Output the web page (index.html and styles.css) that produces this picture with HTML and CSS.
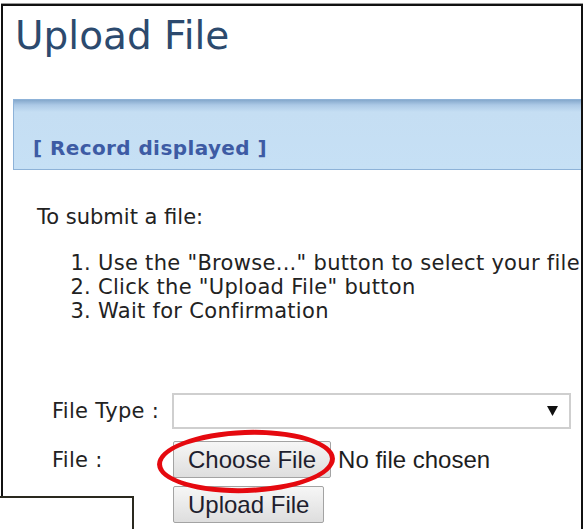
FILE: index.html
```html
<!DOCTYPE html>
<html lang="en">
<head>
<meta charset="utf-8">
<title>Upload File</title>
<link rel="stylesheet" href="styles.css">
</head>
<body>
<div class="window">
  <h1 class="title">Upload File</h1>
  <div class="banner"><span class="banner-text">[ Record displayed ]</span></div>
  <p class="intro">To submit a file:</p>
  <ol class="steps">
    <li>Use the "Browse..." button to select your file</li>
    <li>Click the "Upload File" button</li>
    <li>Wait for Confirmation</li>
  </ol>
  <div class="form">
    <div class="row">
      <span class="label">File Type :</span>
      <div class="select">
        <svg class="arrow" width="11" height="10" viewBox="0 0 11 10"><polygon points="0,0 11,0 5.5,10" fill="#111"/></svg>
      </div>
    </div>
    <div class="row row-file">
      <span class="label">File :</span>
      <div class="file">
        <span class="btn-wrap">
          <button class="btn" type="button">Choose File</button>
          <span class="circle"></span>
        </span>
        <span class="file-name">No file chosen</span>
      </div>
    </div>
    <div class="row row-submit">
      <span class="label"></span>
      <button class="btn btn-upload" type="button">Upload File</button>
    </div>
  </div>
</div>
<div class="back-window"></div>
</body>
</html>
```
FILE: styles.css
```css
html, body {
  margin: 0;
  padding: 0;
  background: #fff;
}

body {
  position: relative;
  width: 585px;
  height: 529px;
  overflow: hidden;
  font-family: "DejaVu Sans", Verdana, sans-serif;
  color: #222;
}

.window {
  margin: 4px 0 0 1px;
  width: 578px;
  height: 600px;
  border: 2px solid #111;
  border-bottom: none;
  box-shadow: 0 -1px 0 #9a9a9a;
  overflow: hidden;
  background: #fff;
}

.title {
  margin: 7px 0 0 12px;
  font-size: 39px;
  line-height: 46px;
  font-weight: normal;
  color: #2c4a6e;
}

.banner {
  margin: 40px 0 0 10px;
  width: 620px;
  height: 69px;
  box-sizing: content-box;
  border: 1px solid #8db2d8;
  background: linear-gradient(to bottom, #85a8cc 0px, #acc9e6 5px, #c5def3 12px, #c6e0f5 100%);
}

.banner-text {
  display: block;
  padding: 36px 0 0 19px;
  font-size: 20px;
  line-height: 24px;
  font-weight: bold;
  letter-spacing: 0.4px;
  color: #3d5ba4;
}

.intro {
  margin: 35px 0 0 34px;
  font-size: 21px;
  line-height: 24px;
}

.steps {
  margin: 22px 0 0 0;
  padding-left: 95px;
  font-size: 21px;
  line-height: 24px;
  letter-spacing: 0.3px;
}

.form {
  margin-top: 70px;
  padding-left: 49px;
  display: flex;
  flex-direction: column;
}

.row {
  display: flex;
  align-items: center;
}

.label {
  width: 120px;
  flex: none;
  font-size: 21px;
  letter-spacing: 0.3px;
  color: #222;
}

.select {
  width: 384px;
  height: 32px;
  border: 2px solid #cfcfcf;
  background: #fff;
  display: flex;
  align-items: center;
  justify-content: flex-end;
  padding-right: 11px;
}

.row-file {
  margin-top: 12px;
}

.row-submit {
  margin-top: 8px;
}

.file {
  display: flex;
  align-items: center;
  margin-left: 1px;
}

.btn-wrap {
  position: relative;
  display: inline-block;
}

.btn {
  display: block;
  height: 37px;
  padding: 0 14px;
  font-family: "Liberation Sans", Arial, sans-serif;
  font-size: 24px;
  color: #1e1e2e;
  background: linear-gradient(to bottom, #f6f6f6, #dedede);
  border: 1px solid #a3a3a3;
  border-radius: 2px;
}

.btn-upload {
  margin-left: 1px;
}

.file-name {
  margin-left: 7px;
  font-family: "Liberation Sans", Arial, sans-serif;
  font-size: 24px;
  color: #1e1e1e;
}

/* red marker ring drawn around the choose button */
.circle {
  position: absolute;
  left: -16px;
  top: -11px;
  width: 168px;
  height: 53px;
  border: 5px solid #e5090f;
  border-radius: 50%;
  transform: rotate(-2deg);
  pointer-events: none;
}

.back-window {
  position: absolute;
  left: -2px;
  top: 496px;
  width: 134px;
  height: 60px;
  background: #fff;
  border-top: 2px solid #2a291f;
  border-right: 2px solid #2a291f;
}
```
